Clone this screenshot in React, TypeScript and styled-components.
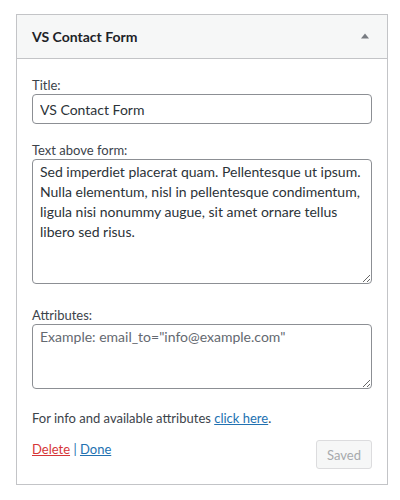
import styled, { createGlobalStyle } from "styled-components";

const GlobalStyle = createGlobalStyle`
  body {
    margin: 0;
    background: #fff;
    font-family: Lato, "Liberation Sans", sans-serif;
    font-size: 13px;
    color: #3c434a;
  }
`;

export default function App() {
  return (
    <>
      <GlobalStyle />
      <Widget>
        <WidgetTop>
          <WidgetTitle>VS Contact Form</WidgetTitle>
          <ToggleArrow width="10" height="6" viewBox="0 0 10 6" aria-hidden>
            <path d="M5 0.5 L9 5.5 L1 5.5 Z" fill="#787c82" />
          </ToggleArrow>
        </WidgetTop>
        <WidgetInside>
          <Field>
            <Label htmlFor="vs-title">Title:</Label>
            <TextInput id="vs-title" type="text" defaultValue="VS Contact Form" />
          </Field>
          <Field $gap={22}>
            <Label htmlFor="vs-text">Text above form:</Label>
            <TextArea
              id="vs-text"
              $height={125}
              defaultValue="Sed imperdiet placerat quam. Pellentesque ut ipsum. Nulla elementum, nisl in pellentesque condimentum, ligula nisi nonummy augue, sit amet ornare tellus libero sed risus."
            />
          </Field>
          <Field $gap={20}>
            <Label htmlFor="vs-attr">Attributes:</Label>
            <TextArea
              id="vs-attr"
              $height={65}
              placeholder='Example: email_to="info@example.com"'
            />
          </Field>
          <Note>
            For info and available attributes <Link href="#">click here</Link>.
          </Note>
          <Actions>
            <ControlLinks>
              <Link href="#" $danger>
                Delete
              </Link>{" "}
              | <Link href="#">Done</Link>
            </ControlLinks>
            <SaveButton type="button" disabled>
              Saved
            </SaveButton>
          </Actions>
        </WidgetInside>
      </Widget>
    </>
  );
}

const Widget = styled.div`
  margin: 14px 0 0 16px;
  width: 372px;
  box-sizing: border-box;
  background: #fff;
  border: 1px solid #c3c4c7;
`;

const WidgetTop = styled.div`
  height: 43px;
  padding: 0 17px 0 15px;
  display: flex;
  align-items: center;
  justify-content: space-between;
  background: #f6f7f7;
  border-bottom: 1px solid #c3c4c7;
`;

const WidgetTitle = styled.h3`
  margin: 0;
  font-size: 14px;
  font-weight: 700;
  color: #1d2327;
`;

const ToggleArrow = styled.svg`
  display: block;
  margin-top: -2px;
`;

const WidgetInside = styled.div`
  padding: 17px 15px 15px;
  display: flex;
  flex-direction: column;
`;

const Field = styled.div<{ $gap?: number }>`
  display: flex;
  flex-direction: column;
  margin-bottom: ${(p) => p.$gap ?? 17}px;
`;

const Label = styled.label`
  line-height: 18px;
`;

const TextInput = styled.input`
  box-sizing: border-box;
  width: 100%;
  height: 30px;
  margin: 0;
  padding: 0 7px;
  font-family: inherit;
  font-size: 14px;
  color: #2c3338;
  border: 1px solid #8c8f94;
  border-radius: 4px;
  outline: none;
`;

const TextArea = styled.textarea<{ $height: number }>`
  display: block;
  box-sizing: border-box;
  width: 100%;
  height: ${(p) => p.$height}px;
  margin: 0;
  padding: 2px 7px;
  font-family: inherit;
  font-size: 14px;
  line-height: 20px;
  color: #2c3338;
  border: 1px solid #8c8f94;
  border-radius: 4px;
  outline: none;

  &::placeholder {
    color: #646970;
  }
`;

const Note = styled.p`
  margin: 0 0 13px;
  line-height: 18px;
`;

const Link = styled.a<{ $danger?: boolean }>`
  color: ${(p) => (p.$danger ? "#d63638" : "#2271b1")};
  text-decoration: underline;
`;

const Actions = styled.div`
  display: flex;
  justify-content: space-between;
  align-items: flex-start;
`;

const ControlLinks = styled.div`
  line-height: 18px;
  color: #2271b1;
`;

const SaveButton = styled.button`
  height: 29px;
  padding: 0 10px;
  font-family: inherit;
  font-size: 13px;
  color: #a7aaad;
  background: #f6f7f7;
  border: 1px solid #dcdcde;
  border-radius: 3px;
`;
